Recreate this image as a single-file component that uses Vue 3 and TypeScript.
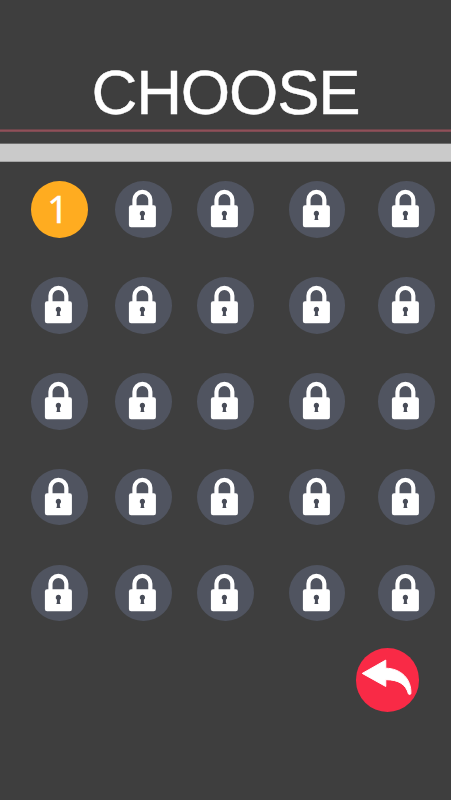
<script setup lang="ts">
interface Level {
  id: number
  unlocked: boolean
}

const levels: Level[] = Array.from({ length: 25 }, (_, i) => ({
  id: i + 1,
  unlocked: i === 0,
}))
</script>

<template>
  <main class="screen">
    <header class="header">
      <h1 class="title">CHOOSE</h1>
    </header>
    <div class="accent"></div>
    <div class="bar"></div>

    <section class="levels">
      <button
        v-for="level in levels"
        :key="level.id"
        class="level"
        :class="{ unlocked: level.unlocked }"
        :aria-label="`Level ${level.id}`"
      >
        <span v-if="level.unlocked" class="number">{{ level.id }}</span>
        <svg v-else class="lock" viewBox="0 0 57 57" aria-hidden="true">
          <path d="M19.6 26V18.9a8 8 0 0 1 16 0V26" fill="none" stroke="#fff" stroke-width="4.2" />
          <rect x="14" y="24.5" width="27.2" height="22" rx="2.2" fill="#fff" />
          <path
            d="M27.6 30a2.8 2.8 0 0 1 1.5 5.1v2.4l.6 1.7h-4.2l.6-1.7v-2.4a2.8 2.8 0 0 1 1.5-5.1z"
            fill="#484c58"
          />
        </svg>
      </button>
    </section>

    <footer class="footer">
      <button class="back" aria-label="Back">
        <svg viewBox="0 0 64 64" aria-hidden="true">
          <path
            d="M6.3 25.6 30 12.2V20.4C45 20.6 56 30.8 55.3 46.2Q54.2 47.4 52.9 46.4C50.3 36.6 43 32 30 31.9V38.8Z"
            fill="#fff"
            stroke="#fff"
            stroke-width="1"
            stroke-linejoin="round"
          />
        </svg>
      </button>
    </footer>
  </main>
</template>

<style>
body {
  margin: 0;
  background: #3e3e3e;
}
</style>

<style scoped>
.screen {
  box-sizing: border-box;
  width: 451px;
  height: 800px;
  overflow: hidden;
  background: #3e3e3e;
  font-family: "Liberation Sans", Arial, sans-serif;
  color: #fff;
}

.header {
  box-sizing: border-box;
  height: 129px;
  padding: 56px 0 0 91.5px;
}

.title {
  margin: 0;
  font-size: 63.5px;
  line-height: 73px;
  font-weight: 400;
  letter-spacing: -1.2px;
  -webkit-text-stroke: 0.4px #fff;
}

.accent {
  height: 3px;
  background: linear-gradient(#6b464b 0 1px, #905059 1px 2px, #7e4b53 2px 3px);
}

.bar {
  box-sizing: border-box;
  height: 19px;
  margin-top: 11px;
  background: #cacaca;
  border-top: 1px solid #6e6e6e;
  border-bottom: 1px solid #a5a5a5;
}

.levels {
  display: grid;
  grid-template-columns: 84px 82px 91.5px 89.5px 57px;
  grid-auto-rows: 95.8px;
  padding: 19.4px 0 0 31px;
}

button {
  display: block;
  padding: 0;
  border: 0;
  color: inherit;
  font: inherit;
}

.level {
  width: 56.6px;
  height: 56.6px;
  border-radius: 50%;
  background: #505460;
}

.level.unlocked {
  background: #ffac20;
}

.number {
  display: block;
  padding: 0 3px 4px 0;
  font-family: "Noto Sans", sans-serif;
  font-size: 38px;
  line-height: 52px;
  text-align: center;
  -webkit-text-stroke: 0.3px #fff;
}

.lock {
  display: block;
  width: 100%;
  height: 100%;
}

.footer {
  display: flex;
  justify-content: flex-end;
  margin-top: -12.2px;
  padding-right: 32px;
}

.back {
  width: 63.5px;
  height: 63.5px;
  border-radius: 50%;
  background: #f92a46;
}

.back svg {
  display: block;
  width: 100%;
  height: 100%;
}
</style>
